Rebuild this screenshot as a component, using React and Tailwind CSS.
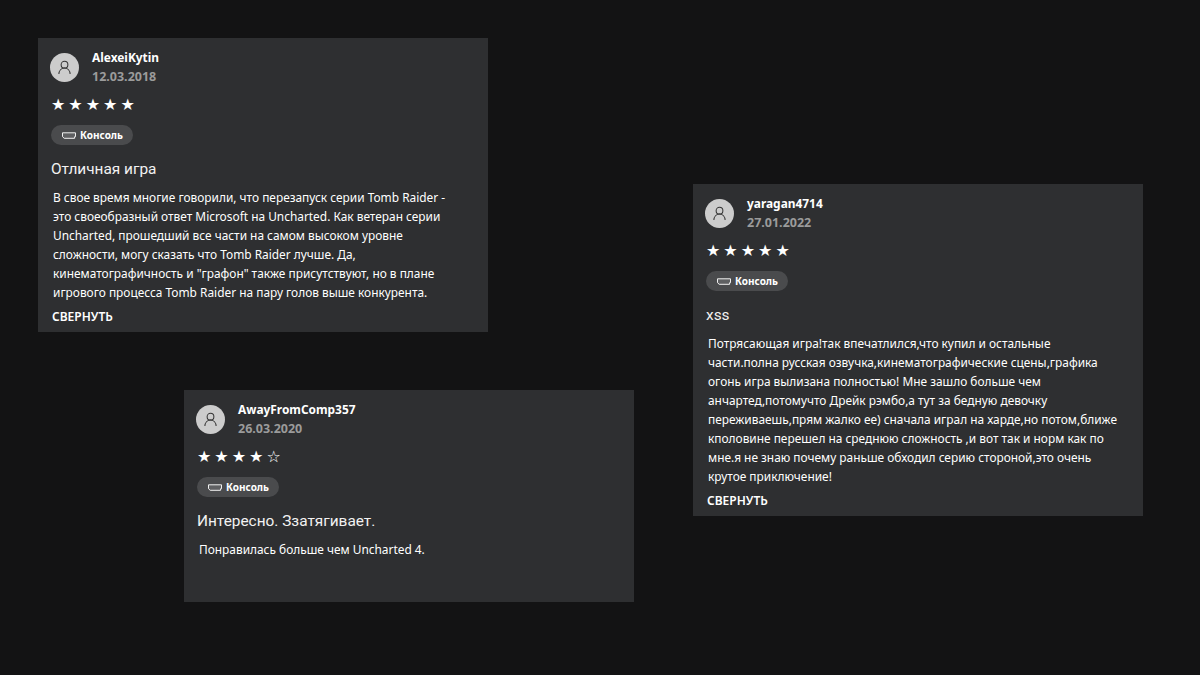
const REVIEWS = [
  {
    pos: 'left-[38px] top-[38px] h-[294px]',
    name: 'AlexeiKytin',
    date: '12.03.2018',
    stars: 5,
    title: 'Отличная игра',
    lines: [
      'В свое время многие говорили, что перезапуск серии Tomb Raider -',
      'это своеобразный ответ Microsoft на Uncharted. Как ветеран серии',
      'Uncharted, прошедший все части на самом высоком уровне',
      'сложности, могу сказать что Tomb Raider лучше. Да,',
      'кинематографичность и "графон" также присутствуют, но в плане',
      'игрового процесса Tomb Raider на пару голов выше конкурента.',
    ],
    collapse: true,
  },
  {
    pos: 'left-[184px] top-[390px] h-[212px]',
    name: 'AwayFromComp357',
    date: '26.03.2020',
    stars: 4,
    title: 'Интересно. Ззатягивает.',
    lines: ['Понравилась больше чем Uncharted 4.'],
  },
  {
    pos: 'left-[693px] top-[184px] h-[332px]',
    name: 'yaragan4714',
    date: '27.01.2022',
    stars: 5,
    title: 'xss',
    lines: [
      'Потрясающая игра!так впечатлился,что купил и остальные',
      'части.полна русская озвучка,кинематографические сцены,графика',
      'огонь игра вылизана полностью! Мне зашло больше чем',
      'анчартед,потомучто Дрейк рэмбо,а тут за бедную девочку',
      'переживаешь,прям жалко ее) сначала играл на харде,но потом,ближе',
      'кполовине перешел на среднюю сложность ,и вот так и норм как по',
      'мне.я не знаю почему раньше обходил серию стороной,это очень',
      'крутое приключение!',
    ],
    collapse: true,
  },
]

function Avatar() {
  return (
    <div className="w-[29px] h-[29px] rounded-full bg-[#cccccc] flex items-center justify-center shrink-0">
      <svg width="15" height="15" viewBox="0 0 16 16" fill="none" stroke="#333333" strokeWidth="1.100">
        <circle cx="8" cy="5" r="3.600" />
        <path d="M2 15c.2-3.600 2.600-6.400 6-6.400s5.800 2.800 6 6.400" />
      </svg>
    </div>
  )
}

function ConsoleIcon() {
  return (
    <svg width="14" height="7" viewBox="0 0 14 7" fill="none">
      <path d="M0.500 0.800H13.500V4.700H12.600V6.300H2.200L0.500 4.700Z" fill="#5f6062" stroke="#f0f0f0" strokeWidth="1" />
    </svg>
  )
}

function ReviewCard({ review }) {
  const { pos, name, date, stars, title, lines, collapse } = review
  return (
    <article className={`absolute w-[450px] bg-[#2e2f31] text-white px-[12px] pt-[15px] ${pos}`}>
      <div className="flex gap-[13px]">
        <Avatar />
        <div className="-mt-[5px]">
          <div className="text-[11.900px] leading-[19px] font-bold">{name}</div>
          <div className="text-[12.500px] leading-[19px] font-bold text-[#9b9b9b]">{date}</div>
        </div>
      </div>
      <div className="mt-[9px] ml-[1px] h-[20px] flex gap-[3px] text-[16px] leading-[20px] font-['DejaVu_Sans',sans-serif]">
        {[1, 2, 3, 4, 5].map((n) => (
          <span key={n}>{n <= stars ? '★' : '☆'}</span>
        ))}
      </div>
      <div className="mt-[10px] ml-[1px] w-[82px] h-[20px] rounded-full bg-[#4a4b4d] flex items-center gap-[4px] pl-[11px]">
        <ConsoleIcon />
        <span className="text-[10px] font-bold leading-[20px]">Консоль</span>
      </div>
      <h3 className="mt-[14px] ml-[1px] h-[20px] text-[15.400px] leading-[20px] font-normal text-[#f2f2f2] font-['Roboto',sans-serif]">
        {title}
      </h3>
      <div className="mt-[9px] ml-[3px] text-[11.900px] leading-[19px] whitespace-nowrap">
        {lines.map((line) => (
          <p key={line}>{line}</p>
        ))}
      </div>
      {collapse && (
        <button className="block mt-[5px] ml-[2px] text-[12px] leading-[19px] font-semibold">СВЕРНУТЬ</button>
      )}
    </article>
  )
}

export default function App() {
  return (
    <div className="relative w-[1200px] h-[675px] overflow-hidden bg-[#131314] font-['Noto_Sans',sans-serif]">
      {REVIEWS.map((review) => (
        <ReviewCard key={review.name} review={review} />
      ))}
    </div>
  )
}
